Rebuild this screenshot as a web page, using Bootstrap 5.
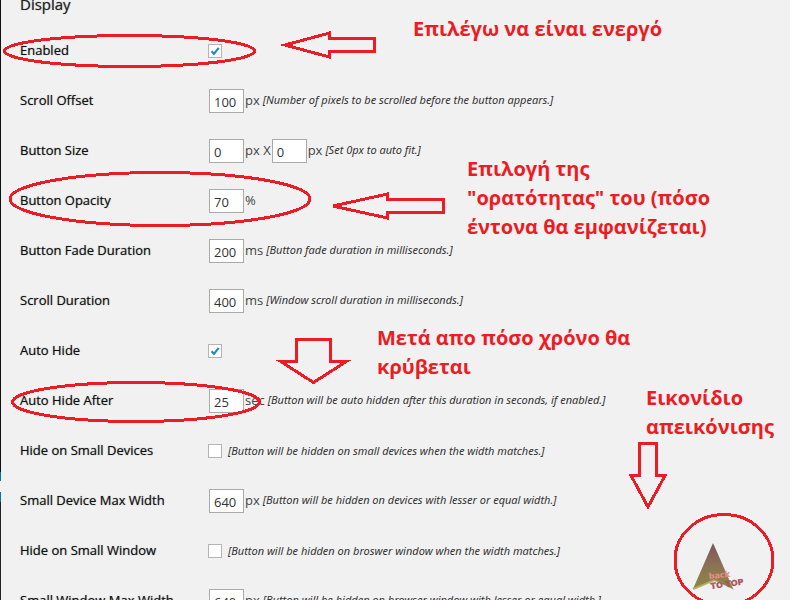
<!DOCTYPE html>
<html lang="el">
<head>
<meta charset="utf-8">
<meta name="viewport" content="width=device-width, initial-scale=1">
<title>Display</title>
<link href="https://cdn.jsdelivr.net/npm/bootstrap@5.3.0/dist/css/bootstrap.min.css" rel="stylesheet">
<style>
body{background:#f1f1f1;color:#444;font:13px/20px "Open Sans","Noto Sans",sans-serif}
.screen{height:100vh}
.admin-edge{width:1px;background:linear-gradient(#111 472px,#0074a2 472px,#0074a2 481px,#f1f1f1 481px,#f1f1f1 492px,#0074a2 492px,#0074a2 502px,#222 502px)}
.settings{padding-left:19px}
.section-title{font-size:15px;line-height:30px;font-weight:500;color:#222;text-shadow:0 0 1px #777;margin:-11px 0 7px}
.setting{height:50px}
.setting-label{width:188px;font-weight:500;color:#111;text-shadow:0 0 1px #777;padding-bottom:2px}
.num{width:35px;height:24px;padding:2px 4px 0;border:1px solid #aaa;border-radius:0;background:#fff;color:#333;font-size:13px;line-height:20px}
.unit{margin-left:1px;padding-bottom:3px}
.unit-between{margin-right:1px}
.hint{font-family:"Noto Sans","Open Sans",sans-serif;font-size:11px;font-style:italic;color:#333;margin-left:3px;padding-bottom:2px}
.setting-label + .num{margin-left:1px}
.tick{appearance:none;width:14px;height:14px;margin:0;border:1px solid #b4b4b4;background:#fff}
.tick:checked{background:#fff url("data:image/svg+xml,%3Csvg xmlns='http://www.w3.org/2000/svg' viewBox='0 0 12 12'%3E%3Cpath d='M2.5 6.2 5 8.8 9.7 2.8' fill='none' stroke='%231e8cbe' stroke-width='2.1'/%3E%3C/svg%3E") center/12px no-repeat}
.tick + .hint{margin-left:6px;padding-bottom:0}
.marks{width:790px;height:600px;pointer-events:none}
.note{color:#ed1c24;font-size:20px;line-height:29px;font-weight:700;white-space:nowrap}
.note-a{left:413px;top:14px}
.note-b{left:467px;top:154px}
.note-c{left:377px;top:323px}
.note-d{left:646px;top:383px}
</style>
<script src="https://cdn.jsdelivr.net/npm/bootstrap@5.3.0/dist/js/bootstrap.bundle.min.js"></script>
</head>
<body>
<div class="screen d-flex position-relative overflow-hidden">
  <div class="admin-edge"></div>
  <form class="settings flex-grow-1 text-nowrap">
    <h2 class="section-title">Display</h2>
    <div class="setting d-flex align-items-center"><label class="setting-label" for="enabled">Enabled</label><input class="tick" type="checkbox" id="enabled" checked></div>
    <div class="setting d-flex align-items-center"><label class="setting-label" for="offset">Scroll Offset</label><input class="num" type="text" id="offset" value="100"><span class="unit">px</span><span class="hint">[Number of pixels to be scrolled before the button appears.]</span></div>
    <div class="setting d-flex align-items-center"><label class="setting-label" for="bw">Button Size</label><input class="num" type="text" id="bw" value="0"><label class="unit unit-between" for="bh">px X</label><input class="num" type="text" id="bh" value="0"><span class="unit">px</span><span class="hint">[Set 0px to auto fit.]</span></div>
    <div class="setting d-flex align-items-center"><label class="setting-label" for="opacity">Button Opacity</label><input class="num" type="text" id="opacity" value="70"><span class="unit">%</span></div>
    <div class="setting d-flex align-items-center"><label class="setting-label" for="fade">Button Fade Duration</label><input class="num" type="text" id="fade" value="200"><span class="unit">ms</span><span class="hint">[Button fade duration in milliseconds.]</span></div>
    <div class="setting d-flex align-items-center"><label class="setting-label" for="scroll">Scroll Duration</label><input class="num" type="text" id="scroll" value="400"><span class="unit">ms</span><span class="hint">[Window scroll duration in milliseconds.]</span></div>
    <div class="setting d-flex align-items-center"><label class="setting-label" for="autohide">Auto Hide</label><input class="tick" type="checkbox" id="autohide" checked></div>
    <div class="setting d-flex align-items-center"><label class="setting-label" for="after">Auto Hide After</label><input class="num" type="text" id="after" value="25"><span class="unit">sec</span><span class="hint">[Button will be auto hidden after this duration in seconds, if enabled.]</span></div>
    <div class="setting d-flex align-items-center"><label class="setting-label" for="hsd">Hide on Small Devices</label><input class="tick" type="checkbox" id="hsd"><span class="hint">[Button will be hidden on small devices when the width matches.]</span></div>
    <div class="setting d-flex align-items-center"><label class="setting-label" for="sdw">Small Device Max Width</label><input class="num" type="text" id="sdw" value="640"><span class="unit">px</span><span class="hint">[Button will be hidden on devices with lesser or equal width.]</span></div>
    <div class="setting d-flex align-items-center"><label class="setting-label" for="hsw">Hide on Small Window</label><input class="tick" type="checkbox" id="hsw"><span class="hint">[Button will be hidden on broswer window when the width matches.]</span></div>
    <div class="setting d-flex align-items-center"><label class="setting-label" for="sww">Small Window Max Width</label><input class="num" type="text" id="sww" value="640"><span class="unit">px</span><span class="hint">[Button will be hidden on browser window with lesser or equal width.]</span></div>
  </form>

  <svg class="marks position-absolute top-0 start-0" viewBox="0 0 790 600" aria-hidden="true">
    <defs>
      <linearGradient id="tri" x1="0" y1="0" x2="0" y2="1"><stop offset="0" stop-color="#80555a"/><stop offset=".5" stop-color="#8b7355"/><stop offset="1" stop-color="#8c8741"/></linearGradient>
    </defs>
    <path d="M713 544 693 589 714 580 733 589Z" fill="#777" opacity=".35" transform="translate(1 1)"/>
    <path d="M713 543 693 589 714 580 733 589Z" fill="url(#tri)"/>
    <path d="M693 589 714 580 722 583" fill="none" stroke="#b5ac55" stroke-width="1.5"/>
    <g font-family="'DejaVu Sans',sans-serif" font-weight="700">
      <text x="709" y="579" font-size="8" fill="#f09a96" stroke="#c4706e" stroke-width=".3" transform="rotate(-6 709 579)">back</text>
      <text x="711" y="589" font-size="8" fill="#b5555a" stroke="#95474b" stroke-width=".3" transform="rotate(-8 711 589)">TO TOP</text>
    </g>
    <g fill="none" stroke="#ed1c24" stroke-width="3" shape-rendering="crispEdges">
      <ellipse cx="129.500" cy="51" rx="125" ry="15.500"/>
      <ellipse cx="160" cy="199" rx="150" ry="26.500"/>
      <ellipse cx="136" cy="402" rx="123.500" ry="19.500"/>
      <ellipse cx="724" cy="560" rx="49" ry="45.500"/>
      <path d="M285 45 329.500 33V38.500H374.500V51.500H329.500V57Z"/>
      <path d="M333 206 387.500 194V199.500H443.500V212.500H387.500V218Z"/>
      <path d="M296.500 339.500H330.500V361H347L313.500 382.500 280 361H296.500Z"/>
      <path d="M639.500 443.500H656.500V475.500H665L648 507 631 475.500H639.500Z"/>
    </g>
  </svg>
  <div class="note note-a position-absolute">Επιλέγω να είναι ενεργό</div>
  <div class="note note-b position-absolute">Επιλογή της<br>"ορατότητας" του (πόσο<br>έντονα θα εμφανίζεται)</div>
  <div class="note note-c position-absolute">Μετά απο πόσο χρόνο θα<br>κρύβεται</div>
  <div class="note note-d position-absolute">Εικονίδιο<br>απεικόνισης</div>
</div>
</body>
</html>
